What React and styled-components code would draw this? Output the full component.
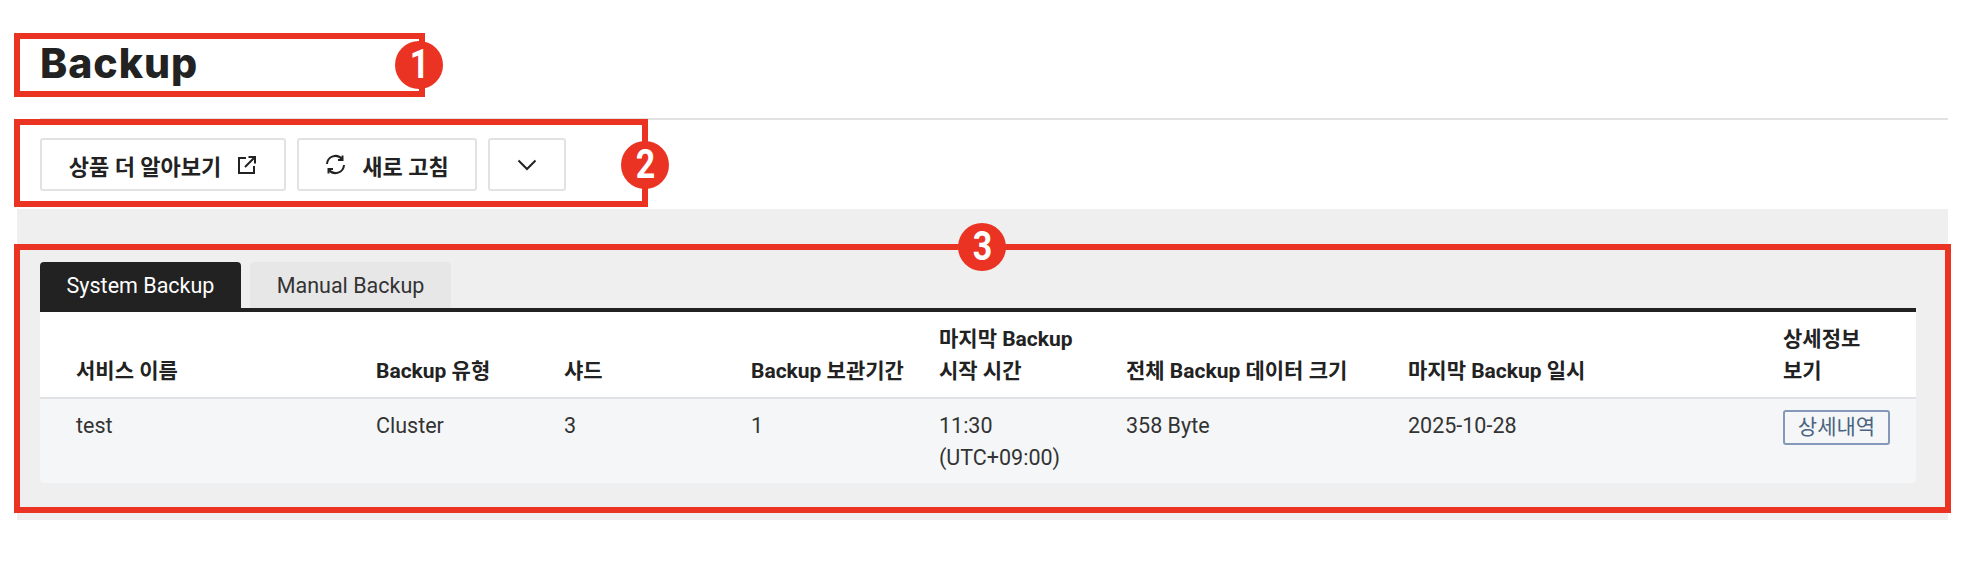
import React from "react";
import styled, { createGlobalStyle } from "styled-components";

const Global = createGlobalStyle`
  html, body { margin: 0; padding: 0; background: #fff; }
  body { font-family: Roboto, "Noto Sans CJK KR", sans-serif; color: #222; }
  * { box-sizing: border-box; }
`;

const Page = styled.div`
  position: relative;
  width: 1968px;
  height: 570px;
  overflow: hidden;
`;

const Header = styled.header`
  height: 120px;
  margin: 0 20px 0 40px;
  padding-top: 33px;
  border-bottom: 2px solid #e2e2e2;
`;

const Title = styled.h1`
  margin: 0;
  font-family: Inter, Roboto, sans-serif;
  font-size: 41px;
  font-weight: 800;
  letter-spacing: 1px;
  line-height: 60px;
  color: #222;
`;

const Toolbar = styled.div`
  display: flex;
  gap: 11px;
  margin-left: 40px;
  padding: 18px 0;
`;

const ToolButton = styled.button`
  display: flex;
  align-items: center;
  justify-content: center;
  gap: ${(p) => p.$gap || 0}px;
  width: ${(p) => p.$width}px;
  height: 53px;
  padding: 0;
  background: #fff;
  border: 2px solid #e2e2e2;
  border-radius: 3px;
  font-family: inherit;
  font-size: 22px;
  font-weight: 700;
  color: #222;
`;

const Panel = styled.section`
  margin-left: 17px;
  width: 1931px;
  height: 311px;
  padding: 53px 32px 37px 23px;
  background: #efefef;
`;

const Tabs = styled.div`
  display: flex;
  gap: 9px;
`;

const Tab = styled.div`
  display: flex;
  align-items: center;
  justify-content: center;
  width: 201px;
  height: 46px;
  border-radius: 4px 4px 0 0;
  font-size: 21.5px;
  background: ${(p) => (p.$active ? "#222" : "#e7e7e7")};
  color: ${(p) => (p.$active ? "#fff" : "#333")};
`;

const Table = styled.table`
  width: 1876px;
  border-collapse: separate;
  border-spacing: 0;
  table-layout: fixed;
  border-top: 4px solid #222;
  border-radius: 0 0 4px 4px;
  overflow: hidden;
  background: #f5f6f8;
`;

const Th = styled.th`
  height: 87px;
  padding: 0 0 10px 36px;
  vertical-align: bottom;
  text-align: left;
  white-space: nowrap;
  background: #fff;
  border-bottom: 2px solid #e0e2e6;
  font-size: 21px;
  font-weight: 700;
  line-height: 32px;
  color: #222;
`;

const Td = styled.td`
  height: 84px;
  padding: 11px 0 10px 36px;
  vertical-align: top;
  white-space: nowrap;
  font-size: 21.5px;
  font-weight: 400;
  line-height: 31.5px;
  color: #333;
`;

const DetailButton = styled.button`
  display: block;
  width: 107px;
  height: 35px;
  padding: 0;
  background: transparent;
  border: 2px solid #8499ba;
  border-radius: 3px;
  font-family: inherit;
  font-size: 21px;
  line-height: 1;
  color: #4a6482;
`;

const Callout = styled.div`
  position: absolute;
  left: ${(p) => p.$x}px;
  top: ${(p) => p.$y}px;
  width: ${(p) => p.$w}px;
  height: ${(p) => p.$h}px;
  border: 6px solid #ea3323;
  pointer-events: none;
`;

const Badge = styled.div`
  position: absolute;
  left: ${(p) => p.$x}px;
  top: ${(p) => p.$y}px;
  display: flex;
  align-items: center;
  justify-content: center;
  width: 48px;
  height: 48px;
  border-radius: 50%;
  background: #ea3323;
  color: #fff;
  font-family: Roboto, sans-serif;
  font-size: 40px;
  font-weight: 700;
  line-height: 1;
`;

const Digit = styled.span`
  display: block;
  transform: scaleX(0.85);
`;

const ExternalIcon = () => (
  <svg width="20" height="20" viewBox="0 0 20 20" fill="none" stroke="#222" strokeWidth="2">
    <path d="M9 3H2v15h15v-7" />
    <path d="M8 12L18 2M11.5 2H18V8.5" />
  </svg>
);

const RefreshIcon = () => (
  <svg width="21" height="21" viewBox="0 0 21 21" fill="none" stroke="#222" strokeWidth="2">
    <path d="M2 10A8.5 8.5 0 0 1 17 5" />
    <path d="M19 11A8.5 8.5 0 0 1 4 16" />
    <path d="M17.5 1.5V6H13" />
    <path d="M3.5 19.5V15H8" />
  </svg>
);

const ChevronIcon = () => (
  <svg width="20" height="12" viewBox="0 0 20 12" fill="none" stroke="#222" strokeWidth="2">
    <path d="M1.5 1.5L10 10L18.5 1.5" />
  </svg>
);

const widths = [300, 188, 187, 188, 187, 282, 375, 169];
const heads = [
  "서비스 이름",
  "Backup 유형",
  "샤드",
  "Backup 보관기간",
  <>마지막 Backup<br />시작 시간</>,
  "전체 Backup 데이터 크기",
  "마지막 Backup 일시",
  <>상세정보<br />보기</>,
];

export default function App() {
  return (
    <Page>
      <Global />
      <Header>
        <Title>Backup</Title>
      </Header>
      <Toolbar>
        <ToolButton $width={246} $gap={16}>
          상품 더 알아보기 <ExternalIcon />
        </ToolButton>
        <ToolButton $width={180} $gap={16}>
          <RefreshIcon /> 새로 고침
        </ToolButton>
        <ToolButton $width={78}>
          <ChevronIcon />
        </ToolButton>
      </Toolbar>
      <Panel>
        <Tabs>
          <Tab $active>System Backup</Tab>
          <Tab>Manual Backup</Tab>
        </Tabs>
        <Table>
          <colgroup>
            {widths.map((w, i) => (
              <col key={i} width={w} />
            ))}
          </colgroup>
          <thead>
            <tr>
              {heads.map((h, i) => (
                <Th key={i}>{h}</Th>
              ))}
            </tr>
          </thead>
          <tbody>
            <tr>
              <Td>test</Td>
              <Td>Cluster</Td>
              <Td>3</Td>
              <Td>1</Td>
              <Td>11:30<br />(UTC+09:00)</Td>
              <Td>358 Byte</Td>
              <Td>2025-10-28</Td>
              <Td><DetailButton>상세내역</DetailButton></Td>
            </tr>
          </tbody>
        </Table>
      </Panel>
      <Callout $x={14} $y={33} $w={411} $h={64} />
      <Callout $x={14} $y={119} $w={634} $h={88} />
      <Callout $x={14} $y={244} $w={1937} $h={269} />
      <Badge $x={395} $y={41}><Digit>1</Digit></Badge>
      <Badge $x={621} $y={141}><Digit>2</Digit></Badge>
      <Badge $x={958} $y={223}><Digit>3</Digit></Badge>
    </Page>
  );
}
